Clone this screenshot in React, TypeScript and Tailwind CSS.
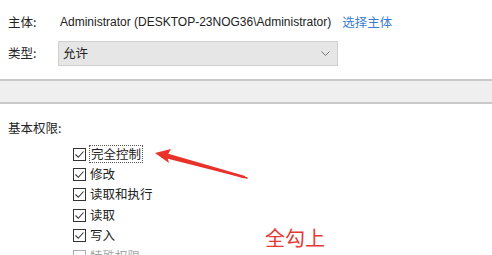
import React from "react";

const font = { fontFamily: '"Noto Sans CJK SC", sans-serif' };
const latin = { fontFamily: '"Liberation Sans", "Noto Sans CJK SC", sans-serif' };

function Check({ checked = true }: { checked?: boolean }) {
  return (
    <span className="w-[13px] h-[13px] border border-[#333] bg-white flex items-center justify-center shrink-0">
      {checked && (
        <svg width="11" height="11" viewBox="0 0 11 11">
          <path d="M1.5 5.5 L4.3 8.3 L9.5 2.5" fill="none" stroke="#333" strokeWidth="1.1" />
        </svg>
      )}
    </span>
  );
}

export default function App() {
  const rows = ["修改", "读取和执行", "读取", "写入"];
  return (
    <div className="w-[492px] h-[255px] bg-white relative overflow-hidden text-[12.5px] text-[#222]" style={font}>
      <div className="h-[79px] pt-[12px] pl-[8px]">
        <div className="flex items-center h-[20px]">
          <span className="w-[52px]">主体:</span>
          <span className="text-[12px]" style={latin}>Administrator (DESKTOP-23NOG36\Administrator)</span>
          <span className="ml-[11px] text-[#3a7ed0]">选择主体</span>
        </div>
        <div className="flex items-center mt-[9px]">
          <span className="w-[50px]">类型:</span>
          <div className="w-[280px] h-[25px] bg-[#e6e6e6] border border-[#cfcfcf] flex items-center justify-between pl-[4px] pr-[7px]">
            <span>允许</span>
            <svg width="9" height="6" viewBox="0 0 9 6">
              <path d="M0.5 0.5 L4.5 4.5 L8.5 0.5" fill="none" stroke="#777" strokeWidth="1" />
            </svg>
          </div>
        </div>
      </div>
      <div className="h-[25px] bg-[#efefef] border-y-2 border-[#c9c9c9]" />
      <div className="pl-[8px] pt-[14px]">
        <div className="h-[20px] flex items-center">基本权限:</div>
        <div className="pl-[65px] mt-[6px] flex flex-col">
          <div className="flex items-center h-[20px] gap-[3px]">
            <Check />
            <span className="border border-dotted border-[#555] px-[1px] leading-[16px]">完全控制</span>
          </div>
          {rows.map((r) => (
            <div key={r} className="flex items-center h-[20.5px] gap-[4px]">
              <Check />
              <span>{r}</span>
            </div>
          ))}
          <div className="flex items-center h-[20px] gap-[4px] opacity-40">
            <Check checked={false} />
            <span>特殊权限</span>
          </div>
        </div>
      </div>
      <svg className="absolute left-0 top-0 pointer-events-none" width="492" height="255">
        <path d="M247 178 L166 156 L166 157.5 Z" stroke="#e8322a" strokeWidth="1.5" fill="#e8322a" strokeLinejoin="round" />
        <path d="M244 177 L168 155" stroke="#e8322a" strokeWidth="2.5" strokeLinecap="round" />
        <path d="M155 153 L171 149 L167 156 L169 163 Z" fill="#e8322a" />
      </svg>
      <div className="absolute left-[265px] top-[224px] text-[20px] text-[#e53935] leading-[28px]">
        全勾上
      </div>
    </div>
  );
}
